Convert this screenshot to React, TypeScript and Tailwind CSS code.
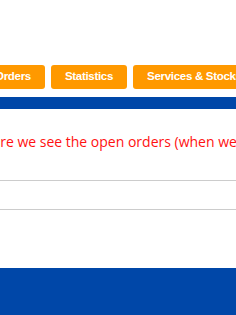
const tabs = ['Orders', 'Statistics', 'Services & Stocks'];

export default function App() {
  return (
    <div className="w-[236px] h-[315px] overflow-hidden bg-white flex flex-col">
      <div className="h-[65px] shrink-0" />
      <nav className="flex gap-[6px] -ml-[19px] h-[24px] shrink-0">
        {tabs.map((t) => (
          <div
            key={t}
            className="shrink-0 h-[24px] px-[14px] rounded-[3px] bg-[#ff9900] text-white font-bold text-[11.5px] tracking-[-0.3px] flex items-center justify-center whitespace-nowrap"
            style={{ fontFamily: '"Liberation Sans", Arial, sans-serif' }}
          >
            {t}
          </div>
        ))}
      </nav>
      <div className="h-[12px] mt-[8px] bg-[#0047a8] shrink-0" />
      <p
        className="mt-[23px] -ml-[18px] whitespace-nowrap text-[14px] text-[#ff1111] leading-[19px] shrink-0"
        style={{ fontFamily: '"Open Sans", sans-serif' }}
      >
        Here we see the open orders (when we have any)
      </p>
      <div className="mt-[29px] border-t border-[#cccccc] h-[29px] shrink-0" />
      <div className="border-t border-[#cccccc] shrink-0" />
      <div className="flex-1" />
      <div className="h-[47px] bg-[#0047a8] shrink-0" />
    </div>
  );
}
